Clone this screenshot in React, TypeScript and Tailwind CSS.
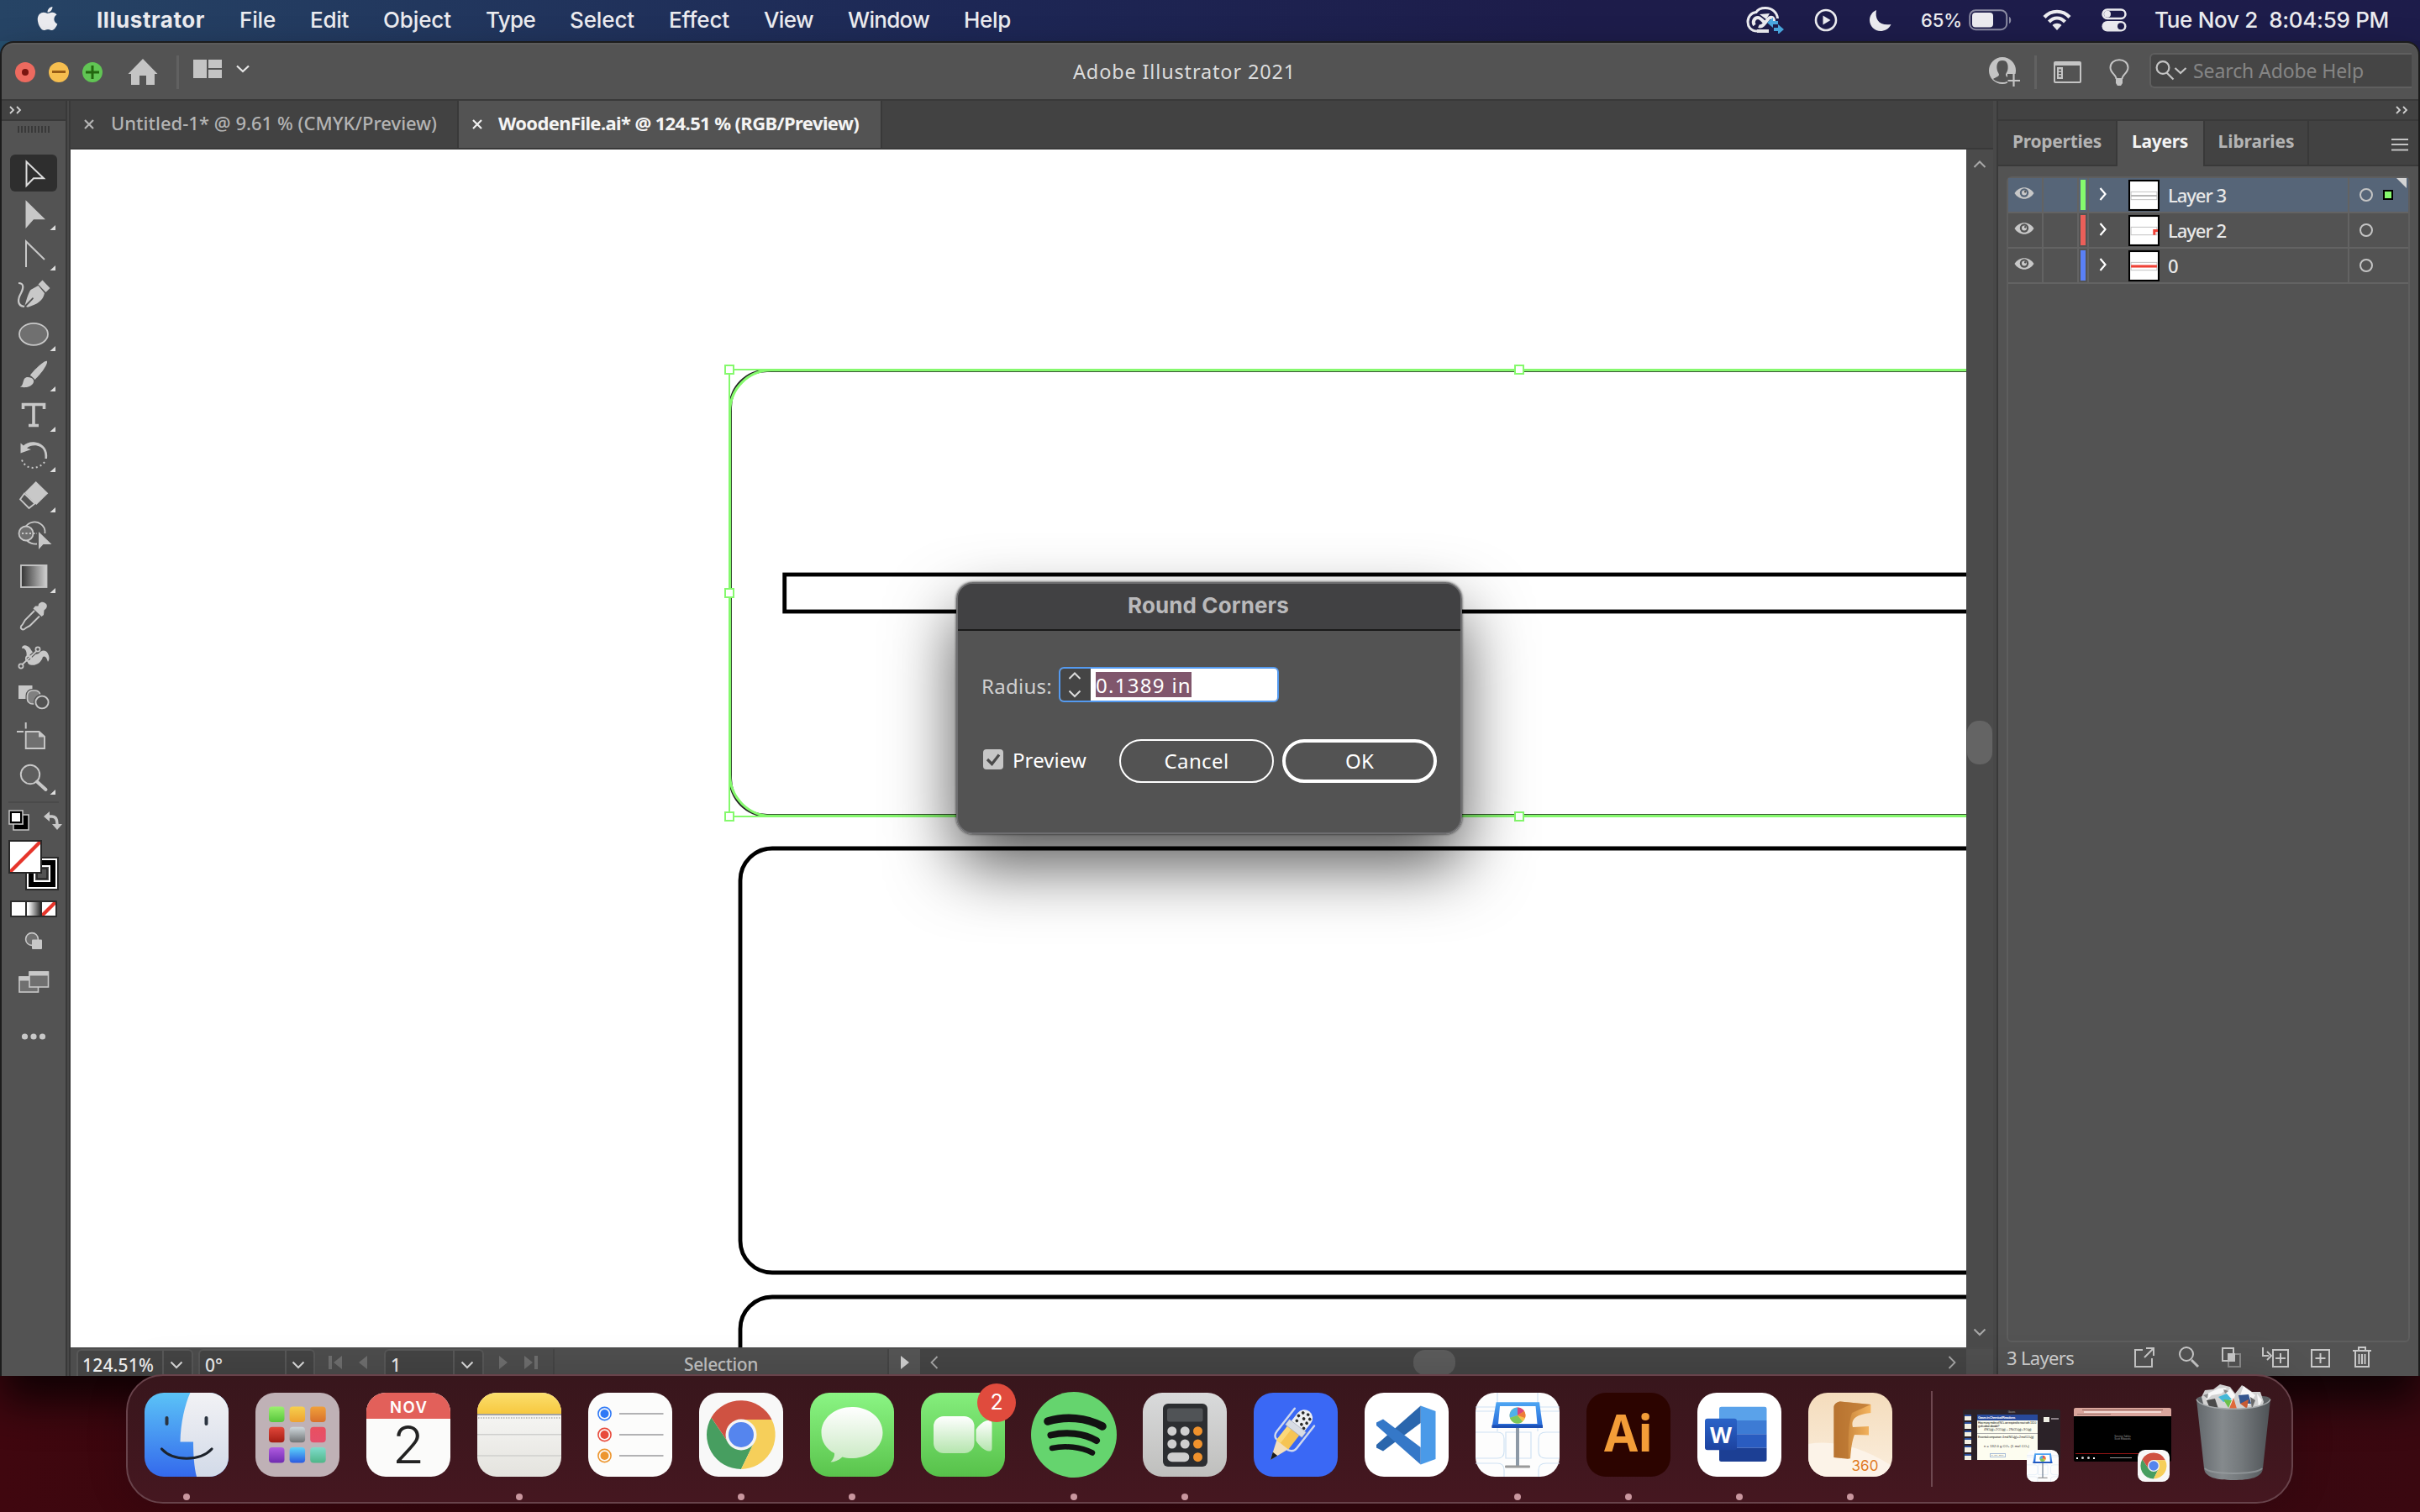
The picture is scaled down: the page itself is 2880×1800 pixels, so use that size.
import React, { useLayoutEffect, useRef, useState } from "react";
import { FaApple } from "react-icons/fa";

const UI = "font-['Noto_Sans','Open_Sans',sans-serif]";
const SYS = "font-['Inter',sans-serif]";

/* Single-line label whose tracking is adjusted so that it fills a known width. */
function Label({ w, className = "", children }: { w: number; className?: string; children: string }) {
  const ref = useRef<HTMLSpanElement>(null);
  const [tracking, setTracking] = useState(0);
  useLayoutEffect(() => {
    const el = ref.current;
    if (!el) return;
    el.style.letterSpacing = "0px";
    const natural = el.getBoundingClientRect().width;
    setTracking((w - natural) / children.length);
    el.style.letterSpacing = `${(w - natural) / children.length}px`;
  }, [w, children]);
  return (
    <span ref={ref} className={`inline-block shrink-0 whitespace-pre ${className}`} style={{ letterSpacing: `${tracking}px` }}>
      {children}
    </span>
  );
}

/* ---------- macOS menu bar ---------- */
const MENUS: [string, number][] = [
  ["File", 43], ["Edit", 46], ["Object", 81], ["Type", 59], ["Select", 77],
  ["Effect", 72], ["View", 59], ["Window", 97], ["Help", 56],
];

function MenuBar() {
  return (
    <div className={`${SYS} flex h-[49px] shrink-0 items-center bg-linear-to-r from-[#264465] via-[#1d2755] via-40% to-[#1d1c4a] to-65% pb-px text-[26px] leading-[32px] font-medium text-[#ececf0]`}>
      <FaApple className="mb-1 ml-[42px] h-[32px] w-[29px]" />
      <Label w={129} className="ml-[44px] font-bold">Illustrator</Label>
      <div className="ml-[41px] flex gap-[41px]">
        {MENUS.map(([name, w]) => (
          <Label key={name} w={w}>{name}</Label>
        ))}
      </div>
      <div className="ml-auto flex items-center">
        <svg className="h-[32px] w-[46px]" viewBox="0 0 46 32" fill="none" stroke="#ececf0" strokeWidth="3">
          <path d="M13 29 C5 29 2 23 2 18 C2 12 6 7 12 6.500 C14 3 19 1.500 23 1.500 C31 1.500 37 7 37.500 14" />
          <path d="M13 29 H27 M10 22 C7 18 10 13 14 13 C17 13 20 17 23 20 M15 23 C19 25 23 19 26 15 C29 11 33 13 33 17" strokeWidth="4" />
          <path d="M16 9 L28 8 L24 15Z" fill="#ececf0" stroke="none" />
          <path d="M25 19 l7 -6 v4 h6 v4 h-6 v4z M45 27 l-7 -6 v4 h-5 v4 h5 v4z" fill="#4aa8e0" stroke="none" />
        </svg>
        <svg className="ml-[35px] h-[28px] w-[28px]" viewBox="0 0 28 28">
          <circle cx="14" cy="14" r="12" fill="none" stroke="#ececf0" strokeWidth="2.600" />
          <path d="M10.500 8.500 L19.500 14 L10.500 19.500Z" fill="#ececf0" />
        </svg>
        <svg className="ml-[37px] h-[27px] w-[28px]" viewBox="0 0 28 27">
          <path d="M9 1 C7 12 12 20 26.500 18 C24 24 18 26 14 26 C7 26 1 20 1 13 C1 8 4 3 9 1Z" fill="#ececf0" />
        </svg>
        <Label w={49} className="ml-[34px] text-[22px]">65%</Label>
        <svg className="ml-[8px] h-[26px] w-[52px]" viewBox="0 0 52 26">
          <rect x="1.200" y="1.200" width="44" height="23" rx="7" fill="none" stroke="#8b8ba3" strokeWidth="2" />
          <rect x="4" y="4" width="25" height="17.500" rx="4" fill="#ececf0" />
          <path d="M48 9 C51 10 51 16 48 17Z" fill="#8b8ba3" />
        </svg>
        <svg className="ml-[36px] h-[26px] w-[34px]" viewBox="0 0 34 26" fill="none" stroke="#ececf0" strokeWidth="4.200">
          <path d="M2 9.500 C10 0.500 24 0.500 32 9.500" />
          <path d="M7.500 15 C13 9 21 9 26.500 15" />
          <path d="M11.500 19 C14.500 16 19.500 16 22.500 19 L17 25Z" fill="#ececf0" stroke="none" />
        </svg>
        <svg className="ml-[36px] h-[28px] w-[30px]" viewBox="0 0 30 28">
          <rect x="1.500" y="1.500" width="27" height="10.500" rx="5.250" fill="none" stroke="#ececf0" strokeWidth="2.500" />
          <circle cx="7" cy="6.700" r="4" fill="#ececf0" />
          <rect x="0.500" y="15" width="29" height="12.500" rx="6.250" fill="#ececf0" />
          <circle cx="23" cy="21.200" r="4" fill="#1d1c4a" />
        </svg>
        <Label w={279} className="mr-[37px] ml-[33px]">Tue Nov 2  8:04:59 PM</Label>
      </div>
    </div>
  );
}

/* ---------- Application bar ---------- */
function AppBar() {
  return (
    <div className="flex h-[67px] shrink-0 items-center rounded-t-[14px] border-t-2 border-[#6a6a6a]/40 bg-[#535353]">
      <div className="flex flex-1 items-center">
        <div className="ml-[16px] flex gap-4">
          <div className="flex size-6 items-center justify-center rounded-full bg-[#ed6a5f]"><div className="size-2 rounded-full bg-[#7a1510]" /></div>
          <div className="flex size-6 items-center justify-center rounded-full bg-[#f6be4f]"><div className="h-[3px] w-4 bg-[#985c15]" /></div>
          <svg className="size-6" viewBox="0 0 24 24"><circle cx="12" cy="12" r="12" fill="#61c554" /><path d="M12 4V20M4 12H20" stroke="#23660f" strokeWidth="3" /></svg>
        </div>
        <svg className="ml-[30px] h-8 w-9" viewBox="0 0 36 32" fill="#c4c4c4">
          <path d="M18 0 L35.500 18 H32 V31 H22 V20 H14 V31 H4 V18 H0.500Z" />
        </svg>
        <div className="ml-[22px] h-10 w-[3px] bg-[#616161]" />
        <div className="mb-2 ml-[17px] flex h-[22px] w-[34px] gap-[2px]">
          <div className="w-4 bg-[#c4c4c4]" />
          <div className="flex flex-1 flex-col gap-[2px]"><div className="flex-1 bg-[#c4c4c4]" /><div className="flex-1 bg-[#c4c4c4]" /></div>
        </div>
        <svg className="mb-2 ml-[16px] h-[10px] w-[18px]" viewBox="0 0 18 10" fill="none" stroke="#e6e6e6" strokeWidth="2.200"><path d="M2 1.500 L9 8 L16 1.500" /></svg>
      </div>
      <Label w={265} className={`${UI} mr-[53px] mb-[2px] text-[23.500px] leading-8 text-[#dcdcdc]`}>Adobe Illustrator 2021</Label>
      <div className="mr-[8px] flex flex-1 items-center justify-end">
        <svg className="h-[36px] w-[38px]" viewBox="0 0 38 36">
          <circle cx="16" cy="16" r="16" fill="#c4c4c4" />
          <path d="M16 4 C10 4 9 9 9.500 14 C10 18 12 19 12 21 C12 23 8 24 5 26 C9 31 20 31 24 28 V25 C22 24 20 23 20 21 C20 19 22 18 22.500 14 C23 9 22 4 16 4Z" fill="#535353" />
          <path d="M22 20H38V36H22Z" fill="#535353" />
          <path d="M29.500 20V35M22.500 28H37" stroke="#c4c4c4" strokeWidth="2.200" />
        </svg>
        <div className="ml-[16px] h-10 w-[3px] bg-[#616161]" />
        <svg className="ml-[20px] h-[26px] w-[34px]" viewBox="0 0 34 26">
          <rect x="1" y="1" width="31" height="24" rx="1" fill="none" stroke="#c4c4c4" strokeWidth="2" />
          <rect x="1" y="1" width="31" height="4" fill="#c4c4c4" />
          <rect x="4" y="7" width="7" height="14" fill="#c4c4c4" />
          <path d="M6 9.500h3v2h-3zM6 13h3v2h-3zM6 16.500h3v2h-3z" fill="#535353" />
        </svg>
        <svg className="ml-[32px] h-[32px] w-[24px]" viewBox="0 0 24 32">
          <path d="M8.500 24 C8.500 19 1.500 17 1.500 10.500 C1.500 5 6 1.200 12 1.200 C18 1.200 22.500 5 22.500 10.500 C22.500 17 15.500 19 15.500 24" fill="none" stroke="#c4c4c4" strokeWidth="2" />
          <path d="M8 23h8v6l-2 3h-4l-2 -3z" fill="#c4c4c4" />
        </svg>
        <div className="mb-[3px] ml-[24px] flex h-[42px] w-[312px] items-center rounded-l-md border-2 border-r-0 border-[#5f5f5f] bg-[#454545]">
          <svg className="ml-[5px] h-[24px] w-[38px]" viewBox="0 0 38 24" fill="none" stroke="#c4c4c4" strokeWidth="2.200">
            <circle cx="9" cy="8.500" r="7.400" /><path d="M13.500 14.500 L21.500 22.500 M23.500 9 L30 15 L36.500 9" />
          </svg>
          <Label w={203} className={`${UI} ml-[7px] text-[23px] leading-8 text-[#858585]`}>Search Adobe Help</Label>
        </div>
      </div>
    </div>
  );
}

/* ---------- Tool strip ---------- */
const G = "#c8c8c8";
const TOOLS: { flyout?: boolean; art: React.ReactNode }[] = [
  { art: <path d="M29.500 10.500 V39 L38 30.300 H50Z" fill="none" stroke="#dcdcdc" strokeWidth="2" /> },
  { flyout: true, art: <path d="M28.500 8.200 V42 L38 31.300 H52Z" fill={G} /> },
  { flyout: true, art: <path d="M29 40 V9.500 L51 31" fill="none" stroke={G} strokeWidth="2" /> },
  { art: <><path d="M20 11 C27 11 26 17 23 23 C19 30 18 38 27 39" fill="none" stroke={G} strokeWidth="2.200" /><path d="M27 39.500 C29 33 31 24 34.500 19 L43.500 14 L51 23 C49 32 43 36 31 39.800 L29 39 L38 29.500 L37 28 L28 37Z" fill={G} /><path d="M48.500 7.500 L57.500 17 L52.500 22 L43.500 12.500Z" fill={G} /></> },
  { flyout: true, art: <ellipse cx="38" cy="23.800" rx="17" ry="13" fill="#707070" stroke={G} strokeWidth="1.800" /> },
  { flyout: true, art: <><path d="M54 8 C51 6 36 21 34 25 C36 26 38 28 39.500 30 C44 26 55 13 54 8Z" fill={G} /><path d="M22 38.500 C27 37 24 27 31 27 C37 27 40 31 37 35 C33 40 25 39.500 22 38.500Z" fill={G} /></> },
  { flyout: true, art: <path d="M25.500 17 V11.500 H50.500 V17 M38 11.500 V36.500 M32 36.500 H44" fill="none" stroke={G} strokeWidth="3.600" /> },
  { flyout: true, art: <><path d="M22.500 9.500 V21.500 L35 17 L30 15.500 C34 12.500 40 11 46 14 C50 16 52 21 51.500 28 L54 28 C55.500 18 50 10 40 8.500 C34 7.700 29 9.500 26 12.500Z" fill={G} /><path d="M24 29.500 C27 37 33 39 38 39 C44 38.500 50 35 52 30" fill="none" stroke={G} strokeWidth="2" strokeDasharray="2 3.200" /></> },
  { flyout: true, art: <><path d="M40.700 7 L55.300 21.200 L41.300 35 L27.300 20.400Z" fill={G} /><path d="M27 21.500 L22 28.500 L32.500 39 L39.500 33.500Z" fill="none" stroke={G} strokeWidth="1.800" /></> },
  { art: <><path d="M29 12.500 C33 7 41 6 46 9.500 C50 12 52 16 51.500 21 M30 29.500 C34 33 38 34 42 33.500" fill="none" stroke={G} strokeWidth="1.800" /><ellipse cx="29" cy="21" rx="8.500" ry="8.500" fill="#707070" stroke={G} strokeWidth="1.800" /><path d="M24 21H42" stroke={G} strokeWidth="2.200" strokeDasharray="2.200 2.200" /><path d="M44 19 V40 L49.500 34 H59.500Z" fill={G} /></> },
  { flyout: true, art: <><defs><linearGradient id="tg"><stop offset="0" stopColor="#333" /><stop offset="1" stopColor="#d0d0d0" /></linearGradient></defs><rect x="23" y="11" width="30.500" height="26" fill="url(#tg)" stroke={G} strokeWidth="1.800" /></> },
  { art: <><path d="M44 9 C48 5 51 7 53 9 C55 12 53 15 50.500 16.500 L50 22 L47.500 24 L37.500 14.500 L40 11.500 L43.500 11.500Z" fill={G} /><path d="M39 17 L28 28 C26.500 30 26 33 23 35.500 C22 38 24.500 40.500 27 39 C29 36.500 32 36.500 34 34.500 L45 23.500" fill="none" stroke={G} strokeWidth="1.900" /></> },
  { art: <><path d="M24 14 C24 9 30 9 34 14 C37 19 39 22 44 20 C47 16 52 15 55 20 C57 24 57 27 55 30 C54 26 52 22 49 24 C47 31 41 35 34 33.500 C29 32 30 25 29.500 19 C29 15 26 13 24 14Z" fill={G} /><path d="M24 33.500 L42 16.500" stroke="#535353" strokeWidth="4" /><path d="M24 33.500 L42 16.500" stroke={G} strokeWidth="1.800" /><circle cx="23" cy="35" r="2.600" fill="#535353" stroke={G} strokeWidth="1.700" /><circle cx="43" cy="15" r="2.600" fill="#535353" stroke={G} strokeWidth="1.700" /><circle cx="32" cy="26" r="3.200" fill="none" stroke={G} strokeWidth="1.700" /></> },
  { art: <><rect x="20" y="10" width="16.500" height="16" fill={G} /><rect x="30.500" y="16" width="15.500" height="16" rx="6" fill="#808080" stroke="#535353" strokeWidth="4" /><rect x="30.500" y="16" width="15.500" height="16" rx="6" fill="#808080" stroke={G} strokeWidth="1.700" /><ellipse cx="48" cy="30" rx="7.600" ry="7.400" fill="#535353" stroke="#535353" strokeWidth="5" /><ellipse cx="48" cy="30" rx="7.600" ry="7.400" fill="none" stroke={G} strokeWidth="1.900" /></> },
  { art: <><path d="M28.700 6 V13.500 M18 17 H26" stroke={G} strokeWidth="2" /><path d="M28.700 17 H44.500 L51 23 V37 H28.700Z" fill="#707070" stroke={G} strokeWidth="1.900" /><path d="M44 17 L51.500 23.500 H44Z" fill={G} /></> },
  { flyout: true, art: <><circle cx="34" cy="20" r="11.200" fill="#5e5e5e" stroke={G} strokeWidth="1.900" /><path d="M42 28.500 L52.500 38" stroke={G} strokeWidth="4" strokeLinecap="round" /></> },
];

function ToolStrip() {
  return (
    <div className="flex w-[84px] shrink-0 border-r-2 border-[#393939] bg-[#484848]">
      <div className="flex w-[80px] flex-col border-x-2 border-[#393939] bg-[#535353]">
        <div className="flex h-[24px] items-center border-b-2 border-[#393939] bg-[#424242] pl-[9px]">
          <svg className="h-[10px] w-[15px]" viewBox="0 0 15 10" fill="none" stroke="#d0d0d0" strokeWidth="1.800"><path d="M1 1 L5 5 L1 9 M9 1 L13 5 L9 9" /></svg>
        </div>
        <div className="mx-auto mt-[6px] flex h-[8px] w-[38px] justify-between">
          {Array.from({ length: 10 }, (_, i) => <div key={i} className="w-[2px] bg-[#393939]" />)}
        </div>
        <div className="mt-[24px] flex flex-col">
          {TOOLS.map((t, i) => (
            <div key={i} className="flex h-12 items-center justify-center">
              <div className={i === 0 ? "flex h-11 w-14 justify-center rounded-md bg-[#2e2e2e]" : "flex h-12 w-14 justify-center"}>
                <svg className={i === 0 ? "-mt-[2px] h-12 w-[76px] shrink-0" : "h-12 w-[76px] shrink-0"} viewBox="0 0 76 48">
                  {t.art}
                  {t.flyout && <path d="M57.500 44 L64 38 V44Z" fill="#dedede" />}
                </svg>
              </div>
            </div>
          ))}
        </div>
        <div className="mx-[8px] mt-[4px] h-[2px] bg-[#4a4a4a]" />
        <svg className="mt-[4px] h-[310px] w-[76px]" viewBox="2 960 76 310">
          <path d="M16 970 H34 V988 H16Z" fill="#000" stroke={G} strokeWidth="1.500" />
          <path d="M22 974H28V982H22Z" fill="#535353" />
          <rect x="11" y="965" width="16" height="16" fill="#000" stroke={G} strokeWidth="1.500" />
          <rect x="14" y="968" width="10" height="10" fill="#fff" />
          <path d="M58 972 H62 C66 972 68 975 68 981" fill="none" stroke={G} strokeWidth="3.400" />
          <path d="M52 972 L59 966 V978Z M62 981 H74 L68 988Z" fill={G} />
          <rect x="31" y="1021" width="38" height="38" fill="#fff" stroke="#282828" strokeWidth="2" />
          <rect x="34" y="1024" width="32" height="32" fill="#000" />
          <rect x="41" y="1031" width="18" height="18" fill="#535353" stroke="#fff" strokeWidth="2" />
          <rect x="44" y="1034" width="12" height="12" fill="#535353" stroke="#222" strokeWidth="1.500" />
          <rect x="11" y="1001" width="38" height="38" fill="#fff" stroke="#282828" strokeWidth="2" />
          <path d="M12 1038 V1035 L45 1002 H48 V1005 L15 1038Z" fill="#e6352b" />
          <rect x="12" y="1072" width="56" height="20" rx="1" fill="#2c2c2c" />
          <rect x="14" y="1074" width="16" height="16" fill="#fff" />
          <defs><linearGradient id="sw"><stop offset="0.100" stopColor="#fff" /><stop offset="1" stopColor="#333" /></linearGradient></defs>
          <rect x="32" y="1074" width="16" height="16" fill="url(#sw)" />
          <rect x="50" y="1074" width="16" height="16" fill="#fff" />
          <path d="M50 1090 V1087 L63 1074 H66 V1077 L53 1090Z" fill="#e6352b" />
          <circle cx="38" cy="1118" r="7.400" fill="#707070" stroke={G} strokeWidth="1.600" />
          <rect x="38" y="1118.500" width="12" height="11.500" rx="1" fill={G} />
          <rect x="23" y="1163" width="22.500" height="18" fill="#707070" stroke={G} strokeWidth="1.600" />
          <rect x="22.500" y="1162.500" width="23" height="5" fill={G} />
          <rect x="35" y="1157" width="22.500" height="18" fill="#707070" stroke={G} strokeWidth="1.600" />
          <rect x="34.500" y="1156.500" width="23" height="5" fill={G} />
          <circle cx="29.500" cy="1234" r="3.600" fill={G} /><circle cx="40" cy="1234" r="3.600" fill={G} /><circle cx="50.500" cy="1234" r="3.600" fill={G} />
        </svg>
      </div>
    </div>
  );
}

/* ---------- Document area ---------- */
const HANDLES: [number, number][] = [[868, 440], [868, 706], [868, 972], [1808, 440], [1808, 972]];

function Artboard() {
  return (
    <svg className="h-[1426px] w-[2256px] bg-white" viewBox="84 178 2256 1426" fill="none">
      <path d="M2400 441.200 H913 A44 44 0 0 0 869.200 485 V927 A44 44 0 0 0 913 970.800 H2400" stroke="#222" strokeWidth="3.600" />
      <path d="M2400 440.800 H918 A49 49 0 0 0 868.700 490 V922 A49 49 0 0 0 918 971.300 H2400" stroke="#85f96d" strokeWidth="3" />
      <path d="M2400 440 H868 V972 H2400" stroke="#85f96d" strokeWidth="2" />
      {HANDLES.map(([x, y]) => <rect key={`${x}-${y}`} x={x - 5} y={y - 5} width="10" height="10" fill="#fff" stroke="#85f96d" strokeWidth="2" />)}
      <rect x="933.700" y="684" width="1600" height="44" stroke="#000" strokeWidth="4.800" />
      <rect x="881" y="1010" width="1600" height="505" rx="38" stroke="#000" strokeWidth="4.800" />
      <rect x="881" y="1544" width="1600" height="505" rx="38" stroke="#000" strokeWidth="4.800" />
    </svg>
  );
}

const Chev = ({ d, className = "h-[10px] w-[16px] stroke-[#dcdcdc]" }: { d: string; className?: string }) => (
  <svg className={className} viewBox="0 0 16 10" fill="none" strokeWidth="2"><path d={d} /></svg>
);
const DOWN = "M1.500 1.500 L8 8 L14.500 1.500";
const UP = "M1.500 8 L8 1.500 L14.500 8";

function StatusField({ text, w, className, box }: { text: string; w: number; className: string; box: string }) {
  return (
    <div className={`flex rounded-t-md border-2 border-b-0 border-[#585858] bg-[#444] ${className}`}>
      <div className={`flex items-center border-r-2 border-[#585858] pt-[3px] ${box}`}>
        <Label w={w} className="text-[21px] leading-8 font-medium text-[#ededed]">{text}</Label>
      </div>
      <div className="flex flex-1 items-center justify-center pt-[4px] pr-[4px]"><Chev d={DOWN} /></div>
    </div>
  );
}

function DocumentArea() {
  return (
    <div className={`${UI} flex w-[2288px] shrink-0 flex-col`}>
      <div className="flex h-[58px] border-b-2 border-[#393939] bg-[#424242]">
        <div className="flex h-14 w-[460px] items-center">
          <svg className="ml-[16px] size-[12px]" viewBox="0 0 12 12" stroke="#b4b4b4" strokeWidth="2.200"><path d="M1 1L11 11M11 1L1 11" /></svg>
          <Label w={388} className="mb-[4px] ml-[20px] text-[22px] leading-8 font-medium text-[#b4b4b4]">Untitled-1* @ 9.61 % (CMYK/Preview)</Label>
        </div>
        <div className="flex h-14 w-[506px] items-center border-x-2 border-[#393939] bg-[#535353]">
          <svg className="ml-[16px] size-[12px]" viewBox="0 0 12 12" stroke="#f0f0f0" strokeWidth="2.200"><path d="M1 1L11 11M11 1L1 11" /></svg>
          <Label w={429} className="mb-[4px] ml-[19px] text-[22px] leading-8 font-bold text-[#f4f4f4]">WoodenFile.ai* @ 124.51 % (RGB/Preview)</Label>
        </div>
      </div>
      <div className="flex">
        <Artboard />
        <div className="flex w-8 flex-col items-center bg-[#4b4b4b] py-[13px]">
          <Chev d={UP} className="h-[10px] w-[16px] stroke-[#a8a8a8]" />
          <div className="mt-[657px] h-[52px] w-[30px] rounded-[14px] bg-[#646464]" />
          <Chev d={DOWN} className="mt-auto h-[10px] w-[16px] stroke-[#a8a8a8]" />
        </div>
      </div>
      <div className="flex h-[34px] bg-[#4d4d4d] pt-[2px]">
        <StatusField text="124.51%" w={85} className="ml-[7px] w-[139px]" box="w-[102px] pl-[5px]" />
        <StatusField text="0°" w={21} className="ml-[6px] w-[139px]" box="w-[103px] pl-[6px]" />
        <svg className="mt-[6px] ml-[16px] h-[20px] w-[48px]" viewBox="0 0 48 20" fill="#6f6f6f"><path d="M0 2h4v16h-4z M16 2V18L6 10z M46 2V18L36 10z" /></svg>
        <StatusField text="1" w={11} className="ml-[18px] w-[119px]" box="w-[82px] pl-[6px]" />
        <svg className="mt-[6px] ml-[18px] h-[20px] w-[48px]" viewBox="0 0 48 20" fill="#6f6f6f"><path d="M0 2V18L10 10z M30 2V18L40 10z M42 2h4v16h-4z" /></svg>
        <div className="ml-[16px] flex w-[400px] justify-center border-x-2 border-[#454545] bg-[#4f4f4f]">
          <Label w={88} className="mt-[2px] text-[21px] leading-8 font-medium text-[#c2c2c2]">Selection</Label>
        </div>
        <div className="flex w-[37px] items-center justify-center bg-[#555]">
          <svg className="h-[18px] w-[10px]" viewBox="0 0 10 18" fill="#d0d0d0"><path d="M0 1L10 9L0 17z" /></svg>
        </div>
        <div className="flex flex-1 items-center bg-[#454545]">
          <svg className="ml-[12px] h-[16px] w-[10px]" viewBox="0 0 10 16" fill="none" stroke="#a8a8a8" strokeWidth="1.800"><path d="M8.500 1L1.500 8L8.500 15" /></svg>
          <div className="ml-[565px] h-[30px] w-[50px] rounded-[14px] bg-[#5c5c5c]" />
          <svg className="ml-auto h-[16px] w-[10px]" viewBox="0 0 10 16" fill="none" stroke="#a8a8a8" strokeWidth="1.800"><path d="M1.500 1L8.500 8L1.500 15" /></svg>
          <div className="ml-[12px] h-full w-[32px] bg-[#505050]" />
        </div>
      </div>
    </div>
  );
}

/* ---------- Layers panel ---------- */
function LayerRow({ name, w, bar, selected, thumb }: { name: string; w: number; bar: string; selected?: boolean; thumb: React.ReactNode }) {
  return (
    <div className={`flex h-[42px] border-b-2 border-[#636363] ${selected ? "bg-[#566578]" : "bg-[#535353]"}`}>
      <div className="flex w-[42px] items-center border-r-2 border-[#636363] pb-[4px] pl-[7px]">
        <svg className="h-[16px] w-[24px]" viewBox="0 0 24 16">
          <path d="M0.500 8 C6 -1 18 -1 23.500 8 C18 17 6 17 0.500 8Z" fill={G} />
          <circle cx="12" cy="7.500" r="5.200" fill={selected ? "#566578" : "#535353"} /><circle cx="12" cy="7.500" r="3" fill={G} />
          <circle cx="13.200" cy="6.300" r="1.200" fill="#535353" />
        </svg>
      </div>
      <div className="w-[42px] border-r-2 border-[#636363]" />
      <div className="flex w-[12px] items-center justify-center border-r-2 border-[#636363]"><div className={`h-9 w-[6px] ${bar}`} /></div>
      <svg className="mt-[11px] ml-[12px] h-[16px] w-[10px]" viewBox="0 0 10 16" fill="none" stroke="#fff" strokeWidth="2.200"><path d="M1.500 1L7.500 8L1.500 15" /></svg>
      <svg className="mt-[2px] ml-[25px] h-[37px] w-[37px]" viewBox="0 0 36 36"><rect x="1" y="1" width="34" height="34" fill="#fff" stroke="#000" strokeWidth="2" />{thumb}</svg>
      <div className="ml-[10px] flex flex-1 items-center"><Label w={w} className="text-[22px] leading-8 font-medium text-[#e8e8e8]">{name}</Label></div>
      <div className="flex w-[72px] items-center border-l-2 border-[#636363] pl-[12px]">
        <div className="size-4 rounded-full border-2 border-[#c4c4c4]" />
        {selected && <div className="ml-[12px] size-3 border-2 border-black bg-[#85f96d]" />}
        {selected && <svg className="mb-[28px] ml-[4px] size-3" viewBox="0 0 12 12"><path d="M0 0H12V12Z" fill="#d4d4d4" /></svg>}
      </div>
    </div>
  );
}

function LayersPanel() {
  return (
    <div className={`${UI} ml-[4px] flex w-[504px] shrink-0 flex-col border-x-2 border-[#393939] bg-[#535353]`}>
      <div className="flex h-[24px] items-center justify-end border-b-2 border-[#393939] bg-[#424242] pr-[12px]">
        <svg className="h-[10px] w-[15px]" viewBox="0 0 15 10" fill="none" stroke="#d0d0d0" strokeWidth="1.800"><path d="M1 1 L5 5 L1 9 M9 1 L13 5 L9 9" /></svg>
      </div>
      <div className="flex h-[54px] text-[21px] leading-8 font-bold">
        <div className="flex w-[142px] items-center justify-center border-r-2 border-b-2 border-[#393939] bg-[#424242]"><Label w={106} className="mb-1 text-[#b4b4b4]">Properties</Label></div>
        <div className="flex w-[102px] items-center justify-center"><Label w={67} className="mr-px mb-[6px] text-[#f4f4f4]">Layers</Label></div>
        <div className="flex w-[126px] items-center justify-center border-x-2 border-b-2 border-[#393939] bg-[#424242]"><Label w={91} className="mb-1 text-[#b4b4b4]">Libraries</Label></div>
        <div className="flex flex-1 items-center justify-end border-b-2 border-[#393939] bg-[#424242] pr-[12px]">
          <svg className="mt-[4px] h-[16px] w-[20px]" viewBox="0 0 20 16" stroke="#c4c4c4" strokeWidth="2"><path d="M0 2H20M0 8H20M0 14.500H20" /></svg>
        </div>
      </div>
      <div className="mx-[10px] mt-[12px] flex h-[1388px] flex-col rounded-md border-2 border-[#5e5e5e]">
        <LayerRow selected name="Layer 3" w={69} bar="bg-[#85f96d]" thumb={<><rect x="3" y="14" width="30" height="9" fill="none" stroke="#c4c4c4" /><path d="M3 18.500H33" stroke="#b8b8b8" strokeWidth="1.800" /></>} />
        <LayerRow name="Layer 2" w={69} bar="bg-[#ec5f59]" thumb={<><rect x="3" y="14" width="30" height="9" fill="none" stroke="#c4c4c4" /><path d="M30 23V18H34" fill="none" stroke="#ef4136" strokeWidth="3" /></>} />
        <LayerRow name="0" w={13} bar="bg-[#5a80f6]" thumb={<><rect x="3" y="14" width="30" height="9" fill="none" stroke="#c4c4c4" /><path d="M3 18.500H33" stroke="#ef4136" strokeWidth="3" /></>} />
      </div>
      <div className="flex flex-1 items-center pb-[4px] pl-[10px]">
        <Label w={80} className="text-[22px] leading-8 text-[#d0d0d0]">3 Layers</Label>
        <svg className="ml-[70px] h-[28px] w-[290px]" viewBox="2538 1602 290 28" fill="none" stroke="#c8c8c8" strokeWidth="2">
          <path d="M2550 1607 H2541 V1627 H2561 V1617 M2552 1616 L2562 1606 M2554 1605 H2563 V1614" />
          <circle cx="2602" cy="1612" r="8" /><path d="M2608 1619 L2616 1627" strokeWidth="3" />
          <rect x="2652" y="1612" width="14" height="15" stroke="#8a8a8a" /><rect x="2645" y="1605" width="13" height="15" /><rect x="2651" y="1611" width="9" height="10" fill="#c8c8c8" stroke="none" />
          <path d="M2693 1604 V1614 H2700 M2698 1609 L2703 1614 L2698 1619" /><rect x="2705" y="1607" width="18" height="20" /><path d="M2714 1611V1623M2708 1617H2720" />
          <rect x="2751" y="1607" width="21" height="20" /><path d="M2761.500 1611V1623M2755.500 1617H2767.500" />
          <path d="M2800 1608H2822M2807 1608V1604H2815V1608M2803 1609V1627H2819V1609M2807.500 1612V1624M2811 1612V1624M2814.500 1612V1624" />
        </svg>
      </div>
    </div>
  );
}

/* ---------- Round Corners dialog ---------- */
function Dialog() {
  return (
    <div className="absolute top-[693px] left-[1138px] flex h-[300px] w-[602px] flex-col overflow-hidden rounded-[20px] border-2 border-[#6e6e70] bg-[#535353]">
      <div className={`${SYS} flex h-[56px] items-start justify-center border-b-2 border-[#1a1a1a] bg-[#414143] pt-[10px] text-[26px] leading-8 font-bold text-[#b9b9bb]`}>
        <Label w={192} className="mr-[2px]">Round Corners</Label>
      </div>
      <div className={`${UI} mt-[43px] flex items-center text-[24px] leading-8`}>
        <Label w={84} className="mt-[3px] ml-[28px] text-[#d0d0d0]">Radius:</Label>
        <div className="ml-[8px] flex h-[42px] w-[262px] rounded-md border-2 border-[#549af0] bg-white">
          <div className="flex w-[36px] flex-col items-center justify-center gap-[11px] rounded-l bg-[#454545] pr-[2px]"><Chev d={UP} /><Chev d={DOWN} /></div>
          <div className="mt-1 ml-[6px] h-[30px] bg-[#80566c]"><Label w={114} className="text-white">0.1389 in</Label></div>
        </div>
      </div>
      <div className={`${UI} mt-[44px] flex items-center text-[24px] leading-8 text-white`}>
        <svg className="mb-1 ml-[30px] size-6" viewBox="0 0 24 24"><rect width="24" height="24" rx="4" fill="#c6c6c6" /><path d="M5 12 L10.500 17.500 L19 6.500" fill="none" stroke="#4a4a4a" strokeWidth="3.200" /></svg>
        <Label w={88} className="mb-[3px] ml-[11px]">Preview</Label>
        <div className="ml-[39px] flex h-[52px] w-[184px] items-center justify-center rounded-full border-2 border-white"><Label w={77}>Cancel</Label></div>
        <div className="ml-[10px] flex h-[52px] w-[184px] items-center justify-center rounded-full border-4 border-white"><Label w={34}>OK</Label></div>
      </div>
    </div>
  );
}

/* ---------- Dock ---------- */
function Grad({ id, a, b, h }: { id: string; a: string; b: string; h?: boolean }) {
  return <linearGradient id={id} x1="0" y1="0" x2={h ? 1 : 0} y2={h ? 0 : 1}><stop offset="0" stopColor={a} /><stop offset="1" stopColor={b} /></linearGradient>;
}
const Tile = ({ fill }: { fill: string }) => <rect width="100" height="100" rx="23" fill={fill} />;

const PADS: [string, string][] = [
  ["#9bf06f", "#57c63c"], ["#f7cf4d", "#eda130"], ["#f0a03a", "#d8702c"],
  ["#e2473a", "#a31d14"], ["#cfd8dc", "#6f7274"], ["#e94f60", "#e5506c"],
  ["#b05be0", "#6f2bb0"], ["#5cd3fa", "#2a58e0"], ["#7fdccb", "#4fb588"],
];

function ChromeArt() {
  return (
    <>
      <Tile fill="#f8f8f8" />
      <path d="M14.500 29.500 A41 41 0 0 0 50 91 L65.500 59 L50 66 L34.500 59Z" fill="#479e60" />
      <path d="M14.500 29.500 L34.500 59 L50 32 H86.500 A41 41 0 0 0 14.500 29.500Z" fill="#cf5242" />
      <path d="M65.500 59 L50 91 A41 41 0 0 0 86.500 32 H50Z" fill="#f6cf5a" />
      <circle cx="50" cy="50" r="18.500" fill="#f4f4f4" /><circle cx="50" cy="50" r="15" fill="#5585ee" />
    </>
  );
}
function KeynoteArt({ id }: { id: string }) {
  return (
    <>
      <defs><Grad id={id} a="#4ea6f3" b="#2567d8" /></defs>
      <Tile fill="#fdfdfd" />
      <path d="M26 0V46M74 0V46M0 17H100M0 22H100M0 47H26Q34 47 34 55V70Q34 78 26 78H0M100 47H84Q75 47 75 55V70Q75 78 84 78H100M0 84H26Q34 84 34 92V100M100 84H84Q75 84 75 92V100M66 47V78H36V47Z" fill="none" stroke="#cfe2f3" strokeWidth="1.200" />
      <path d="M24.600 11.300H76L80 41.300H19.500Z" fill={`url(#${id})`} />
      <path d="M29 16H71.500L73.500 37H27Z" fill="#fff" />
      <path d="M19.500 38.500H80V42H19.500Z" fill="#1c4fb4" />
      <circle cx="50" cy="27" r="9.500" fill="#f2c14b" /><path d="M50 27V17.500A9.500 9.500 0 0 0 41 30Z" fill="#4fb1e8" /><path d="M50 27L41 30A9.500 9.500 0 0 0 56 34.500Z" fill="#7cc85a" /><path d="M50 27V17.500A9.500 9.500 0 0 1 58 22Z" fill="#d9457b" /><path d="M50 27L58 22A9.500 9.500 0 0 1 59 30Z" fill="#ee7b3a" />
      <path d="M48 42H52V88H48Z" fill="#8d99a6" /><rect x="35" y="86.500" width="30" height="3" rx="1" fill="#9a9a9a" />
    </>
  );
}

const APPS: { name: string; running?: boolean; badge?: string; art: React.ReactNode }[] = [
  { name: "Finder", running: true, art: <><defs><Grad id="f1" a="#5bc3f7" b="#3469ec" /><Grad id="f2" a="#f2f2f5" b="#d2dae8" /></defs><Tile fill="url(#f1)" /><path d="M54.400 0H77A23 23 0 0 1 100 23V77A23 23 0 0 1 77 100H62C59 88 58 74 58 58.500H42.500C43 36 48 14 54.400 0Z" fill="url(#f2)" /><path d="M26.500 30V37M73.500 30V37" stroke="#2b3440" strokeWidth="4" strokeLinecap="round" /><path d="M20.500 67C34 82 66 82 80 67" fill="none" stroke="#1c222b" strokeWidth="3.200" strokeLinecap="round" /></> },
  { name: "Launchpad", art: <><Tile fill="#bfb1b6" />{PADS.map(([a, b], i) => <g key={i}><defs><Grad id={`p${i}`} a={a} b={b} /></defs><rect x={16 + (i % 3) * 24.600} y={16.500 + Math.floor(i / 3) * 24.300} width="18.500" height="18.500" rx="4" fill={`url(#p${i})`} /></g>)}</> },
  { name: "Calendar", art: <><Tile fill="#fbfbfa" /><path d="M0 31V23A23 23 0 0 1 23 0H77A23 23 0 0 1 100 23V31Z" fill="#e2605a" /><text x="28" y="23.500" textLength="44" fontSize="18.500" fontWeight="600" fontFamily="Inter" fill="#fff">NOV</text><text x="50" y="84" textAnchor="middle" fontSize="62" fontWeight="300" fontFamily="Inter" fill="#222">2</text></> },
  { name: "Notes", running: true, art: <><defs><Grad id="n1" a="#fbdf6e" b="#f7c83f" /><Grad id="n2" a="#fbfbfa" b="#e4e3de" /></defs><Tile fill="url(#n2)" /><path d="M0 25V23A23 23 0 0 1 23 0H77A23 23 0 0 1 100 23V25Z" fill="url(#n1)" /><path d="M0 26H100" stroke="#a3a3a0" strokeWidth="1.800" /><path d="M1 30H100" stroke="#c2c2bf" strokeWidth="2" strokeDasharray="1.500 1.500" /><path d="M0 49.700H100M0 75H100" stroke="#cfcfcd" strokeWidth="1.500" /></> },
  { name: "Reminders", art: <><Tile fill="#fcfcfb" />{[["#2f79f6", 25], ["#e84b3c", 50], ["#ed962f", 75]].map(([c, y]) => <g key={c}><circle cx="19.500" cy={y} r="7.600" fill="none" stroke={String(c)} strokeWidth="1.600" /><circle cx="19.500" cy={y} r="5" fill={String(c)} /><path d={`M37 ${y}H89.500`} stroke="#b2b2b4" strokeWidth="1.800" /></g>)}</> },
  { name: "Chrome", running: true, art: <ChromeArt /> },
  { name: "Messages", running: true, art: <><defs><Grad id="m1" a="#8bf584" b="#5ac44c" /><Grad id="m2" a="#ffffff" b="#c9e9c2" /></defs><Tile fill="url(#m1)" /><path d="M50 17C70 17 86.500 30 86.500 47.500C86.500 65 70 78 50 78C46 78 42 77.500 38.500 76.500C34 80.500 29 82.500 24.500 82.500C28 79 29.500 75.500 29 72C19 67 13.500 58 13.500 47.500C13.500 30 30 17 50 17Z" fill="url(#m2)" /></> },
  { name: "FaceTime", badge: "2", art: <><defs><Grad id="t1" a="#85ee7d" b="#57c14a" /><Grad id="t2" a="#ffffff" b="#b5e5ae" /></defs><Tile fill="url(#t1)" /><rect x="15" y="28" width="48.500" height="44" rx="12" fill="url(#t2)" /><path d="M65.500 44 C69 38 75 33.500 80 33 C83 33 84.500 34 84.500 37V66C84.500 69 83 70 80 69.500C75 68.500 69 63 65.500 57Z" fill="url(#t2)" /></> },
  { name: "Spotify", running: true, art: <><circle cx="50" cy="50" r="51" fill="#65d46e" /><g fill="none" stroke="#121212" strokeLinecap="round"><path d="M19 34C40 27.500 65 29.500 84 40" strokeWidth="9.500" /><path d="M22.500 50.500C40 46 62 48 77 57" strokeWidth="8" /><path d="M24 66C40 62.500 58 64.500 72 71.500" strokeWidth="6.500" /></g></> },
  { name: "Calculator", running: true, art: <><defs><Grad id="c1" a="#d9dadb" b="#bfbfbd" /></defs><Tile fill="url(#c1)" /><rect x="24" y="13" width="53" height="75" rx="6" fill="#2c2e31" /><rect x="29" y="18.500" width="42.500" height="16" rx="2.500" fill="#505356" />{[45.700, 61].map((y) => <g key={y}><circle cx="34.800" cy={y} r="5.500" fill="#cfcfcf" /><circle cx="50.200" cy={y} r="5.500" fill="#cfcfcf" /></g>)}{[45.700, 61, 76.700].map((y) => <circle key={y} cx="65.500" cy={y} r="5.500" fill="#f0922c" />)}<rect x="29.300" y="71.200" width="26" height="11" rx="5.500" fill="#cfcfcf" /></> },
  { name: "Notability", art: <><Tile fill="#3a68f5" /><g transform="translate(20 80) rotate(38)"><path d="M0 0L-9 -24H9Z" fill="#f3dfbd" /><path d="M0 0L-3.500 -9H3.500Z" fill="#1d1d1d" /><path d="M-9 -23H9V-45H-9Z" fill="#f6c454" /><path d="M-9 -23H-3V-45H-9Z" fill="#fbd879" /><path d="M-9 -50V-64A10 10 0 0 1 11 -64V-50Z" fill="#eceef2" /><path d="M-4 -68h.1M2 -70h.1M7 -67h.1M-6 -62h.1M1 -63h.1M7 -61h.1M-4 -56h.1M3 -56h.1M8 -54h.1" stroke="#2b2b2b" strokeWidth="3.600" strokeLinecap="round" /><path d="M-12 -52H13V-44H-12Z" fill="#d8dce4" stroke="#9aa2b4" strokeWidth=".6" /><path d="M-15 -66V-32Q-15 -25 -10 -24M16 -64V-30Q16 -24 9 -22" fill="none" stroke="#cfd8ee" strokeWidth="2.400" strokeLinecap="round" /></g></> },
  { name: "Visual Studio Code", art: <><Tile fill="#fff" /><path d="M66.700 15.500L84.500 22V79L66.700 85.500Z" fill="#4a9ae8" /><path d="M66.700 15.500V36L22 69.500L14 65.500V62Z" fill="#2a66ad" /><path d="M22 31.500L66.700 65V85.500L14 39V35.500Z" fill="#3578c8" /></> },
  { name: "Keynote", running: true, art: <KeynoteArt id="k1" /> },
  { name: "Illustrator", running: true, art: <><Tile fill="#2c0400" /><text x="21" y="70" textLength="58" fontSize="61" fontWeight="700" fontFamily="Open Sans" fill="#f39d38" lengthAdjust="spacingAndGlyphs">Ai</text></> },
  { name: "Word", running: true, art: <><defs><Grad id="w1" a="#2a63c8" b="#1d43a0" /></defs><Tile fill="#fff" /><path d="M26 19Q26 16.700 28.500 16.700H80Q82.500 16.700 82.500 19V33H26Z" fill="#5aa2ea" /><path d="M26 33H82.500V49.300H26Z" fill="#3d7bd4" /><path d="M26 49.300H82.500V65.700H26Z" fill="#2a5cc0" /><path d="M26 65.700H82.500V79.500Q82.500 82 80 82H28.500Q26 82 26 79.500Z" fill="#1c3f94" /><rect x="9" y="30.700" width="38" height="37.500" rx="3" fill="url(#w1)" /><text x="15" y="59.500" textLength="26" fontSize="27" fontWeight="700" fontFamily="Open Sans" fill="#fff" lengthAdjust="spacingAndGlyphs">W</text></> },
  { name: "Fusion 360", running: true, art: <><defs><Grad id="u1" a="#f4dcbc" b="#fbeedd" /><Grad id="u2" a="#b5702c" b="#f5b55f" h /></defs><Tile fill="url(#u1)" /><path d="M0 61C30 56 62 64 98 86Q92 100 77 100H23A23 23 0 0 1 0 77Z" fill="#fcf3e8" /><path d="M74.400 14L38 10.500C34 11 30.500 14 30.500 17V77L50 78.500C51 66 52 58 55 50L72 50.500V40L53 41C51 33 54 26 74.400 24Z" fill="url(#u2)" /><path d="M30.500 77L48 79C47 55 48 35 52 24L74.400 14L38 10.500C34 11 30.500 14 30.500 17Z" fill="#b87431" opacity=".75" /><text x="51.500" y="92.500" textLength="32" fontSize="17" fontFamily="Inter" fill="#e07a22">360</text></> },
];

function MiniKeynote() {
  return (
    <div className="relative h-[60px] w-[116px] font-['Liberation_Sans',sans-serif]">
      <div className="flex h-full w-full flex-col rounded-[2px] bg-[#2b2228]">
        <div className="mx-auto mt-px h-[5px] w-[30px] text-center text-[3px] leading-[4px] text-[#aaa]">Gases</div>
        <div className="flex flex-1">
          <div className="ml-[2px] flex w-[8px] flex-col gap-[2px]">
            {Array.from({ length: 6 }, (_, i) => <div key={i} className="flex-1 border-t-[2px] border-[#2c4f9d] bg-[#f2efe2]" />)}
          </div>
          <div className="ml-[7px] flex w-[72px] flex-col items-start bg-[#fdfdf0] text-[4px] leading-[4px] whitespace-nowrap text-[#222]">
            <div className="h-[7px] w-full bg-[#27499a] pl-px leading-[7px] font-bold text-white"><Label w={44}>Gases in Chemical Reactions</Label></div>
            <Label w={69} className="mt-px ml-px text-[3.500px]">How many moles of NO₂ are required to react with 132.0</Label>
            <Label w={25} className="ml-px">g of carbon dioxide?</Label>
            <Label w={56} className="ml-[8px] text-[3.500px]">4 NO₂(g) + 2 CO₂(g) → 2 N₂CO₃(g) + 3 O₂(g)</Label>
            <div className="mt-[2px] h-px w-full bg-[#aaa]" />
            <Label w={66} className="mt-[2px] ml-px text-[3.500px]">Essential comparison: 4 mol NO₂(g) = 2 mol CO₂(g)</Label>
            <Label w={54} className="mt-[7px] ml-[8px]">n = 132.0 g CO₂ (1 mol CO₂)</Label>
            <div className="mt-[6px] ml-[15px] flex h-[5px] w-[19px] items-center justify-center border border-[#a9bdd8]"><Label w={15} className="text-[2.500px] leading-[3px]">6.00 mol</Label></div>
          </div>
          <div className="ml-[7px] mt-[3px] h-[6px] w-[7px] bg-[#efefe6]" />
          <div className="mt-[4px] ml-[2px] h-[2px] w-[9px] bg-[#8a8088]" />
        </div>
      </div>
      <svg className="absolute top-[48px] left-[76px] size-[38px]" viewBox="0 0 100 100"><KeynoteArt id="k2" /></svg>
    </div>
  );
}

function MiniChrome() {
  return (
    <div className="relative ml-[16px] h-[64px] w-[116px] font-['Liberation_Sans',sans-serif]">
      <div className="flex h-full w-full flex-col rounded-[2px] bg-black">
        <div className="flex h-[10px] flex-col justify-between rounded-t-[2px] bg-[#d9a59c] py-[2px]">
          <div className="mx-[10px] h-px bg-[#8d6058]" />
          <div className="mx-[12px] h-[2px] bg-[#f1d9d4]" />
          <div className="ml-[4px] h-px w-[40px] bg-[#a0756c]" />
        </div>
        <div className="mt-[23px] text-center text-[3px] leading-[3px] text-[#999]">Serving Tables<br />Scott Edwards</div>
        <div className="mt-[15px] ml-[2px] h-px w-[76px] bg-[#8f1414]" />
        <div className="mt-[3px] ml-[3px] flex items-center gap-[4px]"><div className="size-[2px] bg-white" /><div className="size-[3px] rounded-full bg-[#ccc]" /><div className="size-[3px] rounded-full bg-[#ccc]" /><div className="size-[2px] bg-white" /><div className="ml-[14px] h-px w-[26px] bg-[#999]" /></div>
      </div>
      <svg className="absolute top-[50px] left-[76px] size-[38px]" viewBox="0 0 100 100"><ChromeArt /></svg>
    </div>
  );
}

function Trash() {
  return (
    <svg className="ml-[28px] h-[118px] w-[92px]" viewBox="0 0 92 118">
      <defs>
        <linearGradient id="tr"><stop offset="0" stopColor="#63686c" /><stop offset=".35" stopColor="#858a8d" /><stop offset=".6" stopColor="#74797c" /><stop offset="1" stopColor="#4e5256" /></linearGradient>
      </defs>
      <path d="M2 19 C2 14 20 14 46 14 C72 14 90 14 90 19 L86 28 H6Z" fill="#5d6164" />
      <path d="M8 16L12 8L22 7L30 1L42 4L48 12L56 2L68 10L78 10L82 22L78 32H12Z" fill="#d2d2d2" />
      <path d="M13 13L28 6L38 5L32 12L20 14L14 20Z M42 6L48 14L44 26L32 18Z M58 3L72 14L64 26L52 20Z M74 12L80 20L76 28Z" fill="#f8f8f8" />
      <path d="M14 20L24 18L28 30L18 30Z" fill="#4a4a4a" /><path d="M28 16L38 12L44 19L34 22Z" fill="#45b8d8" /><path d="M34 19L44 20L40 29Z" fill="#6cc04a" /><path d="M52 14L64 13L67 24L54 24Z" fill="#34568f" /><path d="M54 24L64 19L62 30Z" fill="#c75a34" /><path d="M66 16L72 20L68 30Z" fill="#6b6b6b" /><path d="M46 17L50 30H41Z" fill="#e06a3a" /><path d="M10 14L16 12L15 18Z M34 7L40 9L36 12Z" fill="#8a8a8a" />
      <path d="M2 19 C8 34 84 34 90 19 L81 101 C80 112 66 115 46 115 C26 115 12 112 11 101Z" fill="url(#tr)" />
      <path d="M12 101C18 109 74 109 80 101" fill="none" stroke="#9aa0a3" strokeWidth="2" opacity=".7" />
      <path d="M2 19 C8 34 84 34 90 19" fill="none" stroke="#a5a9ab" strokeWidth="1.500" />
    </svg>
  );
}

function Dock() {
  return (
    <div className="absolute top-[1636px] left-[150px] flex h-[154px] w-[2579px] items-start rounded-[44px] border-2 border-[#68434b] bg-linear-to-b from-[#38161c] to-[#451720] pl-[20px] shadow-[0_0_50px_rgba(0,0,0,0.16)]">
      <div className="flex gap-[32px] pt-[20px]">
        {APPS.map((a) => (
          <div key={a.name} className="relative flex flex-col items-center">
            <svg className="size-[100px] overflow-visible" viewBox="0 0 100 100" aria-label={a.name}>{a.art}</svg>
            {a.badge && <div className={`${SYS} absolute -top-[11px] left-[67px] flex size-[46px] items-center justify-center rounded-full bg-[#e04b3d] text-[25px] text-white`}>{a.badge}</div>}
            {a.running && <div className="mt-[20px] size-2 rounded-full bg-[#c9979f]" />}
          </div>
        ))}
      </div>
      <div className="mt-[18px] ml-[46px] h-[114px] w-[2px] bg-[#6e4850]" />
      <div className="mt-[40px] ml-[36px]"><MiniKeynote /></div>
      <div className="mt-[38px]"><MiniChrome /></div>
      <div className="mt-[9px]"><Trash /></div>
    </div>
  );
}

export default function App() {
  return (
    <div className="relative flex h-[1800px] w-[2880px] flex-col overflow-hidden bg-linear-to-r from-[#40070f] via-[#2c050b] via-30% to-[#3a0810]">
      <MenuBar />
      <div className="flex h-[1589px] shrink-0 flex-col bg-linear-to-r from-[#26506f] to-[#1c1b47] to-20%">
        <div className="flex h-full flex-col overflow-hidden rounded-t-[16px] border-2 border-b-0 border-[#1c1c1c] bg-[#393939] shadow-[0_30px_50px_rgba(0,0,0,0.75)]">
          <AppBar />
          <div className="-mx-[2px] mt-[2px] flex flex-1 bg-[#484848]">
            <ToolStrip />
            <DocumentArea />
            <LayersPanel />
          </div>
        </div>
      </div>
      <div className="pointer-events-none absolute top-[178px] left-[84px] h-[1426px] w-[2256px] overflow-hidden">
        <div className="absolute top-[515px] left-[1054px] h-[300px] w-[602px] rounded-[20px] shadow-[0_36px_80px_rgba(0,0,0,0.68),0_0_3px_rgba(0,0,0,0.8)]" />
      </div>
      <Dialog />
      <Dock />
    </div>
  );
}
